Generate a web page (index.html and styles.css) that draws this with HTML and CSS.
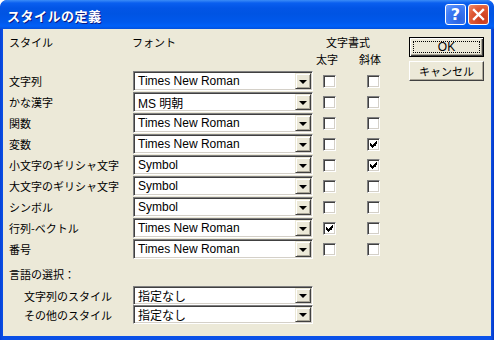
FILE: index.html
```html
<!DOCTYPE html>
<html lang="ja">
<head>
<meta charset="utf-8">
<link rel="stylesheet" href="styles.css">
</head>
<body>
<div class="window">
  <div class="titlebar">
    <span class="title">スタイルの定義</span>
    <div class="tbtns">
      <div class="tbtn help">?</div>
      <div class="tbtn close">
        <svg width="13" height="13" viewBox="0 0 13 13"><path d="M2 2 L11 11 M11 2 L2 11" stroke="#fff" stroke-width="2.4" stroke-linecap="square"/></svg>
      </div>
    </div>
  </div>
  <div class="client">
    <div class="left">
      <div class="hdr1">
        <span class="lab">スタイル</span>
        <span class="fonthdr">フォント</span>
        <span class="fmthdr">文字書式</span>
      </div>
      <div class="hdr2">
        <span class="bold-h">太字</span>
        <span class="ital-h">斜体</span>
      </div>
      <div class="rows">
        <div class="row"><span class="lab">文字列</span><div class="combo"><span class="val">Times New Roman</span><span class="drop"><i></i></span></div><span class="cb"></span><span class="cb c2"></span></div>
        <div class="row"><span class="lab">かな漢字</span><div class="combo"><span class="val">MS 明朝</span><span class="drop"><i></i></span></div><span class="cb"></span><span class="cb c2"></span></div>
        <div class="row"><span class="lab">関数</span><div class="combo"><span class="val">Times New Roman</span><span class="drop"><i></i></span></div><span class="cb"></span><span class="cb c2"></span></div>
        <div class="row"><span class="lab">変数</span><div class="combo"><span class="val">Times New Roman</span><span class="drop"><i></i></span></div><span class="cb"></span><span class="cb c2"><svg class="chk" width="7" height="7" viewBox="0 0 7 7"><path d="M6 0h1v3h-1zM5 1h1v4h-1zM4 2h1v3h-1zM3 3h1v3h-1zM2 4h1v3h-1zM1 3h1v3h-1zM0 2h1v3h-1z" fill="#000"/></svg></span></div>
        <div class="row"><span class="lab">小文字のギリシャ文字</span><div class="combo"><span class="val">Symbol</span><span class="drop"><i></i></span></div><span class="cb"></span><span class="cb c2"><svg class="chk" width="7" height="7" viewBox="0 0 7 7"><path d="M6 0h1v3h-1zM5 1h1v4h-1zM4 2h1v3h-1zM3 3h1v3h-1zM2 4h1v3h-1zM1 3h1v3h-1zM0 2h1v3h-1z" fill="#000"/></svg></span></div>
        <div class="row"><span class="lab">大文字のギリシャ文字</span><div class="combo"><span class="val">Symbol</span><span class="drop"><i></i></span></div><span class="cb"></span><span class="cb c2"></span></div>
        <div class="row"><span class="lab">シンボル</span><div class="combo"><span class="val">Symbol</span><span class="drop"><i></i></span></div><span class="cb"></span><span class="cb c2"></span></div>
        <div class="row"><span class="lab">行列-ベクトル</span><div class="combo"><span class="val">Times New Roman</span><span class="drop"><i></i></span></div><span class="cb"><svg class="chk" width="7" height="7" viewBox="0 0 7 7"><path d="M6 0h1v3h-1zM5 1h1v4h-1zM4 2h1v3h-1zM3 3h1v3h-1zM2 4h1v3h-1zM1 3h1v3h-1zM0 2h1v3h-1z" fill="#000"/></svg></span><span class="cb c2"></span></div>
        <div class="row"><span class="lab">番号</span><div class="combo"><span class="val">Times New Roman</span><span class="drop"><i></i></span></div><span class="cb"></span><span class="cb c2"></span></div>
      </div>
      <div class="langhdr">言語の選択：</div>
      <div class="langrows">
        <div class="lrow"><span class="llab">文字列のスタイル</span><div class="combo"><span class="val">指定なし</span><span class="drop"><i></i></span></div></div>
        <div class="lrow"><span class="llab">その他のスタイル</span><div class="combo"><span class="val">指定なし</span><span class="drop"><i></i></span></div></div>
      </div>
    </div>
    <div class="right">
      <div class="btn default"><span class="focus">OK</span></div>
      <div class="btn">キャンセル</div>
    </div>
  </div>
</div>
</body>
</html>
```
FILE: styles.css
```css
html, body {
  margin: 0;
  padding: 0;
  background: #fff;
}
body {
  width: 494px;
  height: 340px;
  overflow: hidden;
  font-family: "Liberation Sans", "Noto Sans CJK JP", sans-serif;
  font-size: 12px;
  color: #000;
}
.window {
  width: 494px;
  height: 340px;
  box-sizing: border-box;
  display: flex;
  flex-direction: column;
  border-radius: 7px 7px 0 0;
  background: linear-gradient(to right, #0842d6 0, #0a4fe6 3px, #0a52ea 491px, #0636c4 494px);
  overflow: hidden;
}
.titlebar {
  height: 29px;
  flex: none;
  display: flex;
  align-items: center;
  padding: 0 5px 0 7px;
  background: linear-gradient(to bottom, #3b8cf7 0, #0a5fef 3px, #0255e6 8px, #0054e3 14px, #0058ec 22px, #0060f8 26px, #0350dd 29px);
  border-radius: 7px 7px 0 0;
}
.title {
  color: #fff;
  font-family: "Noto Sans CJK JP", sans-serif;
  font-weight: bold;
  font-size: 13px;
  text-shadow: 1px 1px 0 #0a1883;
  letter-spacing: 0.5px;
  flex: 1;
  margin-top: 1px;
}
.tbtns {
  display: flex;
  gap: 2px;
}
.tbtn {
  width: 21px;
  height: 21px;
  box-sizing: border-box;
  border: 1px solid #fff;
  border-radius: 3px;
  display: flex;
  align-items: center;
  justify-content: center;
}
.help {
  background: radial-gradient(circle at 70% 75%, #2b63e0 0, #3d7bf5 60%, #6fa0ff 100%);
  color: #fff;
  font-family: "DejaVu Sans", sans-serif;
  font-weight: bold;
  font-size: 16px;
  line-height: 1;
}
.close {
  background: radial-gradient(circle at 70% 75%, #c8381b 0, #e05a35 60%, #f09070 100%);
}
.client {
  flex: 1;
  margin: 0 3px 4px 3px;
  background: #ece9d8;
  display: flex;
  align-items: flex-start;
}
.left {
  padding: 6px 0 0 6px;
  width: 400px;
}
.hdr1 {
  display: flex;
  height: 14px;
  line-height: 14px;
  font-family: "Noto Sans CJK JP", sans-serif;
  font-size: 11px;
}
.hdr1 .lab { width: 123px; }
.fonthdr { width: 194px; }
.hdr2 {
  display: flex;
  height: 14px;
  line-height: 14px;
  margin-top: 3px;
  padding-left: 307px;
  font-family: "Noto Sans CJK JP", sans-serif;
  font-size: 11px;
}
.bold-h { width: 43px; }
.rows {
  margin-top: 5px;
  display: flex;
  flex-direction: column;
  gap: 1px;
}
.row {
  display: flex;
  align-items: center;
  height: 20px;
}
.lab {
  width: 124px;
  font-family: "Noto Sans CJK JP", sans-serif;
  font-size: 11px;
  white-space: nowrap;
}
.combo {
  width: 180px;
  height: 100%;
  box-sizing: border-box;
  background: #fff;
  border-top: 1px solid #808080;
  border-left: 1px solid #808080;
  border-right: 1px solid #fff;
  border-bottom: 1px solid #fff;
  box-shadow: inset 1px 1px 0 #404040, inset -1px -1px 0 #d4d0c8;
  display: flex;
  align-items: stretch;
  padding: 1px;
}
.val {
  flex: 1;
  padding-left: 3px;
  display: flex;
  align-items: center;
  white-space: nowrap;
  font-family: "Liberation Sans", "Noto Sans CJK JP", sans-serif;
  font-size: 12px;
}
.drop {
  width: 16px;
  box-sizing: border-box;
  background: #ece9d8;
  border-top: 1px solid #ece9d8;
  border-left: 1px solid #ece9d8;
  border-right: 1px solid #404040;
  border-bottom: 1px solid #404040;
  box-shadow: inset 1px 1px 0 #fff, inset -1px -1px 0 #aca899;
  display: flex;
  align-items: center;
  justify-content: center;
}
.drop i {
  display: block;
  width: 0;
  height: 0;
  border-left: 4px solid transparent;
  border-right: 4px solid transparent;
  border-top: 4px solid #000;
  margin-top: 1px;
}
.cb {
  width: 13px;
  height: 13px;
  box-sizing: border-box;
  margin-left: 10px;
  background: #fff;
  border-top: 1px solid #808080;
  border-left: 1px solid #808080;
  border-right: 1px solid #fff;
  border-bottom: 1px solid #fff;
  box-shadow: inset 1px 1px 0 #404040, inset -1px -1px 0 #d4d0c8;
  position: relative;
}
.cb.c2 { margin-left: 31px; }
.chk {
  position: absolute;
  left: 2px;
  top: 2px;
  shape-rendering: crispEdges;
}
.langhdr {
  margin-top: 8px;
  height: 14px;
  line-height: 14px;
  font-family: "Noto Sans CJK JP", sans-serif;
  font-size: 11px;
}
.langrows {
  margin-top: 5px;
  display: flex;
  flex-direction: column;
}
.lrow {
  display: flex;
  align-items: center;
  height: 19px;
}
.llab {
  width: 109px;
  padding-left: 15px;
  font-family: "Noto Sans CJK JP", sans-serif;
  font-size: 11px;
  white-space: nowrap;
}
.right {
  margin-left: auto;
  margin-right: 7px;
  padding-top: 8px;
  display: flex;
  flex-direction: column;
  gap: 4px;
}
.btn {
  width: 75px;
  height: 20px;
  box-sizing: border-box;
  background: #ece9d8;
  border-top: 1px solid #fff;
  border-left: 1px solid #fff;
  border-right: 1px solid #404040;
  border-bottom: 1px solid #404040;
  box-shadow: inset -1px -1px 0 #aca899;
  display: flex;
  align-items: center;
  justify-content: center;
  font-family: "Noto Sans CJK JP", sans-serif;
  font-size: 11px;
}
.btn.default {
  border: 1px solid #000;
  box-shadow: inset 1px 1px 0 #fff, inset -1px -1px 0 #404040, inset -2px -2px 0 #aca899;
  padding: 3px;
}
.focus {
  flex: 1;
  align-self: stretch;
  border: 1px dotted #000;
  display: flex;
  align-items: center;
  justify-content: center;
  font-family: "Liberation Sans", sans-serif;
  font-size: 12px;
}
```
